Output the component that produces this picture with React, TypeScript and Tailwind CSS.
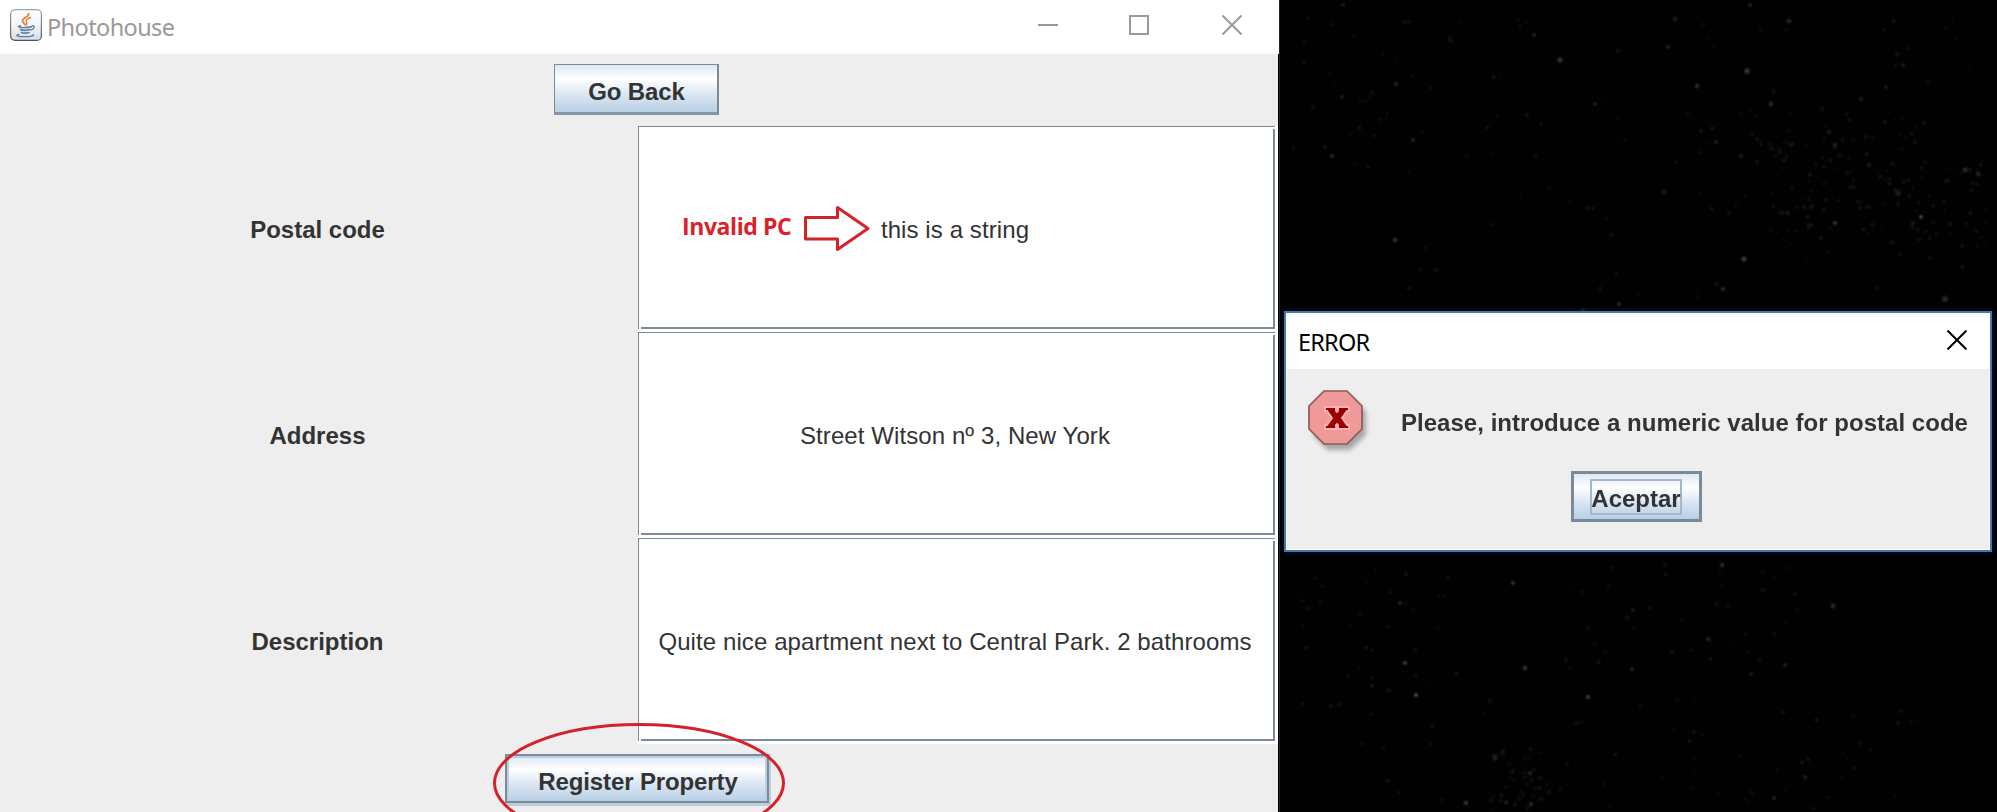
import React from "react";

const stars: [number, number, number, number][] = [
  [1342, 5, 2, 0.2], [1533, 35, 1.5, 0.4], [1559, 60, 2.5, 0.35], [1395, 84, 2, 0.25], [1341, 97, 2, 0.2],
  [1412, 140, 1.8, 0.3], [1331, 156, 1.8, 0.35], [1394, 240, 2.2, 0.35], [1365, 321, 2, 0.25], [1515, 348, 1.8, 0.4],
  [1582, 311, 2.4, 0.35], [1618, 304, 1.6, 0.45], [1653, 341, 2, 0.3], [1674, 379, 2, 0.3], [1663, 192, 2, 0.25],
  [1749, 5, 1.8, 0.3], [1674, 19, 2, 0.25], [1788, 21, 2, 0.3], [1667, 47, 1.6, 0.35], [1746, 71, 2.6, 0.35],
  [1696, 86, 2, 0.35], [1770, 104, 2.4, 0.25], [1594, 104, 1.8, 0.25], [1715, 142, 1.8, 0.25], [1740, 156, 2, 0.2],
  [1834, 145, 2, 0.25], [1828, 132, 2, 0.22], [1868, 165, 2, 0.22], [1920, 217, 1.7, 0.6], [1834, 223, 1.7, 0.5],
  [1743, 259, 2.2, 0.45], [1722, 289, 2, 0.3], [1944, 299, 3, 0.25], [1964, 170, 2.4, 0.28], [1977, 174, 1.8, 0.3],
  [1902, 65, 2, 0.2], [1860, 99, 1.8, 0.25], [1885, 87, 1.8, 0.2], [1897, 193, 3, 0.16], [1787, 213, 1.8, 0.25],
  [1512, 583, 1.7, 0.45], [1399, 603, 1.8, 0.3], [1404, 663, 1.8, 0.5], [1415, 695, 2, 0.5], [1371, 686, 1.6, 0.25],
  [1524, 668, 2.2, 0.35], [1587, 697, 2, 0.4], [1631, 669, 1.8, 0.25], [1721, 565, 1.9, 0.35], [1832, 606, 2.4, 0.25],
  [1632, 610, 1.8, 0.25], [1707, 639, 2.2, 0.2], [1784, 665, 1.8, 0.3], [1750, 674, 2, 0.2], [1465, 803, 2.2, 0.35],
  [1494, 758, 2.6, 0.2], [1530, 804, 2, 0.3], [1529, 773, 2, 0.25], [1773, 798, 2, 0.25],
];

const dust: [number, number, number, number, number][] = [
  [1770, 120, 160, 120, 80], [1730, 110, 60, 60, 14], [1880, 160, 110, 90, 34], [1490, 750, 60, 60, 40],
  [1290, 10, 110, 160, 26], [1560, 560, 240, 110, 40], [1300, 570, 160, 140, 34], [1400, 10, 580, 290, 110],
  [1360, 700, 560, 110, 60],
];

function dustPoints() {
  const out: [number, number, number][] = [];
  let seed = 7;
  const next = () => {
    seed = (seed * 16807) % 2147483647;
    return seed / 2147483647;
  };
  dust.forEach(([x, y, w, h, n]) => {
    for (let i = 0; i < n; i++) out.push([x + next() * w, y + next() * h, 0.05 + next() * 0.1]);
  });
  return out;
}

function Starfield() {
  return (
    <svg className="absolute inset-0" width="718" height="812" viewBox="1279 0 718 812">
      <defs>
        <filter id="soft" x="-50%" y="-50%" width="200%" height="200%">
          <feGaussianBlur stdDeviation="1" />
        </filter>
      </defs>
      <g filter="url(#soft)">
        {dustPoints().map(([x, y, o], i) => (
          <circle key={i} cx={x} cy={y} r="1.9" fill="#a8a0a0" opacity={o} />
        ))}
        {stars.map(([x, y, r, o], i) => (
          <circle key={i} cx={x} cy={y} r={r} fill="#a4a4a4" opacity={o} />
        ))}
      </g>
    </svg>
  );
}

function JavaIcon() {
  return (
    <svg width="32" height="32" viewBox="0 0 32 32" className="shrink-0">
      <defs>
        <linearGradient id="tile" x1="0" y1="0" x2="0" y2="1">
          <stop offset="0" stopColor="#ffffff" />
          <stop offset="0.5" stopColor="#f4f6f8" />
          <stop offset="1" stopColor="#d3dce6" />
        </linearGradient>
        <linearGradient id="edge" x1="0" y1="0" x2="0" y2="1">
          <stop offset="0" stopColor="#a2a6aa" />
          <stop offset="1" stopColor="#4e5358" />
        </linearGradient>
      </defs>
      <rect x="0.6" y="0.6" width="30.8" height="30.8" rx="4.5" fill="url(#tile)" stroke="url(#edge)" strokeWidth="1.2" />
      <g fill="none" stroke="#e08033" strokeLinecap="round">
        <path d="M18.5 4.5c.8 3.500-6.300 4.300-6 7.500.1 1.800 2.300 2.500 2.400 4" strokeWidth="1.700" />
        <path d="M20.500 8.500c-3 1-4.700 2.300-4.300 4 .3 1.200 1.200 1.900.3 3.300" strokeWidth="1.500" />
      </g>
      <g fill="none" stroke="#587d9f" strokeLinecap="round">
        <path d="M10.500 16.600c-1.800.4-2.700 1-1.500 1.400 3.200.9 8.500.6 12.500-.2" strokeWidth="1.400" />
        <path d="M10.500 20.500c2.500 1.100 6.500.9 9.500.1M11.500 23.400c2 .9 5 .8 7.500.1" strokeWidth="1.600" />
        <path d="M22 16.800c3-.7 3.300 2.600-.8 4.300" strokeWidth="1.300" />
        <path d="M9 25.300c-5 1.300-.5 2.500 6 2.400 5.500 0 9.500-1 8.200-2" strokeWidth="1.300" />
      </g>
    </svg>
  );
}

function TitleBar() {
  return (
    <header className="flex h-[54px] w-[1279px] shrink-0 items-start bg-white pl-[10px] pt-[9px]">
      <JavaIcon />
      <span className="ml-[5px] mt-[2px] w-[900px] whitespace-nowrap font-['Noto_Sans',sans-serif] text-[23.5px] leading-[32px] tracking-[-0.6px] text-[#999999]">
        Photohouse
      </span>
      <svg className="ml-[91px] mt-[6px]" width="206" height="20" viewBox="0 0 206 20" fill="none" stroke="#999999" strokeWidth="2">
        <path d="M0 10h20M92 1h18v18H92z" />
        <path d="M184.500 0.500l19 19M203.500 0.500l-19 19" />
      </svg>
    </header>
  );
}

function Field({ children }: { children: React.ReactNode }) {
  return (
    <div className="relative h-[206px] bg-white">
      <div className="h-[203px] w-[637px] border-l border-t border-[#7a8a99] pl-[2px] pt-[2px]">
        <div className="flex h-full items-center justify-center whitespace-nowrap border-b-2 border-r-2 border-[#7a8a99] text-[24px] tracking-[0.09px] text-[#333333]">
          <span className="pr-[4px] pt-[4px]">{children}</span>
        </div>
      </div>
    </div>
  );
}

function Row({ label, children }: { label: string; children: React.ReactNode }) {
  return (
    <div className="flex h-[206px]">
      <div className="flex w-[638px] items-center justify-center pr-[3px] pt-[2px] text-[24px] font-bold text-[#333333]">{label}</div>
      <div className="w-[640px]">{children}</div>
    </div>
  );
}

function Annotation() {
  return (
    <div className="absolute left-[43px] top-[78px] flex items-start">
      <span className="mt-[4px] w-[122px] whitespace-nowrap pl-px font-['Open_Sans',sans-serif] text-[23px] font-bold leading-[36px] tracking-[-0.42px] text-[#dc2129]">
        Invalid PC
      </span>
      <svg width="68" height="48" viewBox="803 204 68 48" fill="none" stroke="#d3222a" strokeWidth="3" strokeLinejoin="round">
        <path d="M805.500 217.500H837.500V207.500L868 228.500L837.500 249.500V239H805.500Z" />
      </svg>
    </div>
  );
}

function PropertyWindow() {
  return (
    <section className="relative flex h-[812px] w-[1279px] shrink-0 flex-col">
      <TitleBar />
      <main className="flex h-[758px] w-[1278px] flex-col overflow-hidden bg-[#eeeeee]">
        <div className="flex h-[72px] items-start pl-[554px] pt-[10px]">
          <button className="h-[51px] w-[165px] border-2 border-b-[3px] border-l border-t border-[#7a8a99] border-b-[#8496a8] bg-[linear-gradient(#dde8f3,#ffffff_30%,#dde8f3_60%,#b8cfe5)] pl-px pt-[7px] text-[24px] font-bold tracking-[-0.1px] text-[#333333]">
            Go Back
          </button>
        </div>
        <Row label="Postal code">
          <Field>
            this is a string
            <Annotation />
          </Field>
        </Row>
        <Row label="Address">
          <Field>Street Witson nº 3, New York</Field>
        </Row>
        <Row label="Description">
          <Field>Quite nice apartment next to Central Park. 2 bathrooms</Field>
        </Row>
        <div className="flex items-start pl-[505px] pt-[10px]">
          <div className="border-b-[3px] border-r-2 border-[#bccddd]">
            <button className="h-[49px] w-[264px] border-2 border-[#7a8a99] bg-[linear-gradient(#dde8f3,#ffffff_30%,#dde8f3_60%,#b8cfe5)] pl-[2px] pt-[7px] text-[24px] font-bold tracking-[-0.12px] text-[#333333] outline-2 -outline-offset-4 outline-[#bccfe2]">
              Register Property
            </button>
          </div>
        </div>
      </main>
      <svg className="absolute bottom-0 left-[490px]" width="300" height="92" viewBox="490 720 300 92" fill="none">
        <ellipse cx="639" cy="783" rx="144.500" ry="58.500" stroke="#d3222a" strokeWidth="3" />
      </svg>
    </section>
  );
}

function ErrorIcon() {
  return (
    <svg width="64" height="66" viewBox="0 0 64 66" className="shrink-0">
      <defs>
        <filter id="shade" x="-20%" y="-20%" width="150%" height="150%">
          <feGaussianBlur stdDeviation="2.800" />
        </filter>
      </defs>
      <path d="M19 7h24l15 15v23L42 60H19L6 46V22z" fill="#000" opacity="0.3" filter="url(#shade)" />
      <path d="M16 1h23l15 15v23L39 54H16L1 39V16z" fill="#f09999" stroke="#8f5a5a" strokeWidth="1.700" />
      <path
        d="M17 17h11v4l1 1 1-1v-4h11v4h-2l-5 7 5 7h2v4H30v-4l-1-1-1 1v4H17v-4h2l5-7-5-7h-2z"
        fill="#990000"
        stroke="#ffb3b3"
        strokeWidth="1.800"
      />
    </svg>
  );
}

function ErrorDialog() {
  return (
    <div className="absolute left-[4px] top-[311px] flex h-[241px] w-[708px] flex-col border-2 border-[#4779a4] bg-[#eeeeee] shadow-[0_0_3px_1px_#00103a]">
      <div className="flex h-[56px] shrink-0 items-start justify-between bg-white pl-[12px] pr-[23px]">
        <span className="mt-[13px] whitespace-nowrap font-['Noto_Sans',sans-serif] text-[23.500px] leading-[32px] tracking-[-0.8px] text-black">
          ERROR
        </span>
        <svg className="mt-[17px]" width="20" height="20" viewBox="0 0 20 20" fill="none" stroke="#000" strokeWidth="2">
          <path d="M0.500 0.500l19 19M19.500 0.500l-19 19" />
        </svg>
      </div>
      <div className="flex h-[102px] w-full items-start border-x border-[#f8fcff] pl-[21px] pt-[21px]">
        <ErrorIcon />
        <span className="ml-[29px] mt-[18px] whitespace-nowrap text-[24px] font-bold leading-[30px] tracking-[0.03px] text-[#333333]">
          Please, introduce a numeric value for postal code
        </span>
      </div>
      <div className="flex flex-1 items-start border-x border-b border-[#f8fcff] pl-[284px]">
        <button className="flex h-[51px] w-[131px] items-center justify-center border-[3px] border-[#7a8a99] bg-[linear-gradient(#dde8f3,#ffffff_30%,#dde8f3_60%,#b8cfe5)] text-[24px] font-bold text-[#333333]">
          <span className="mr-px flex h-[36px] w-[92px] items-center justify-center border-2 border-[#a3b8cc] pt-[4px]">Aceptar</span>
        </button>
      </div>
    </div>
  );
}

export default function App() {
  return (
    <div className="flex h-[812px] w-[1997px] overflow-hidden bg-black font-['Liberation_Sans',Arial,sans-serif]">
      <PropertyWindow />
      <aside className="relative h-[812px] w-[718px] overflow-hidden border-l border-[#242424] bg-[#020102]">
        <Starfield />
        <ErrorDialog />
      </aside>
    </div>
  );
}
